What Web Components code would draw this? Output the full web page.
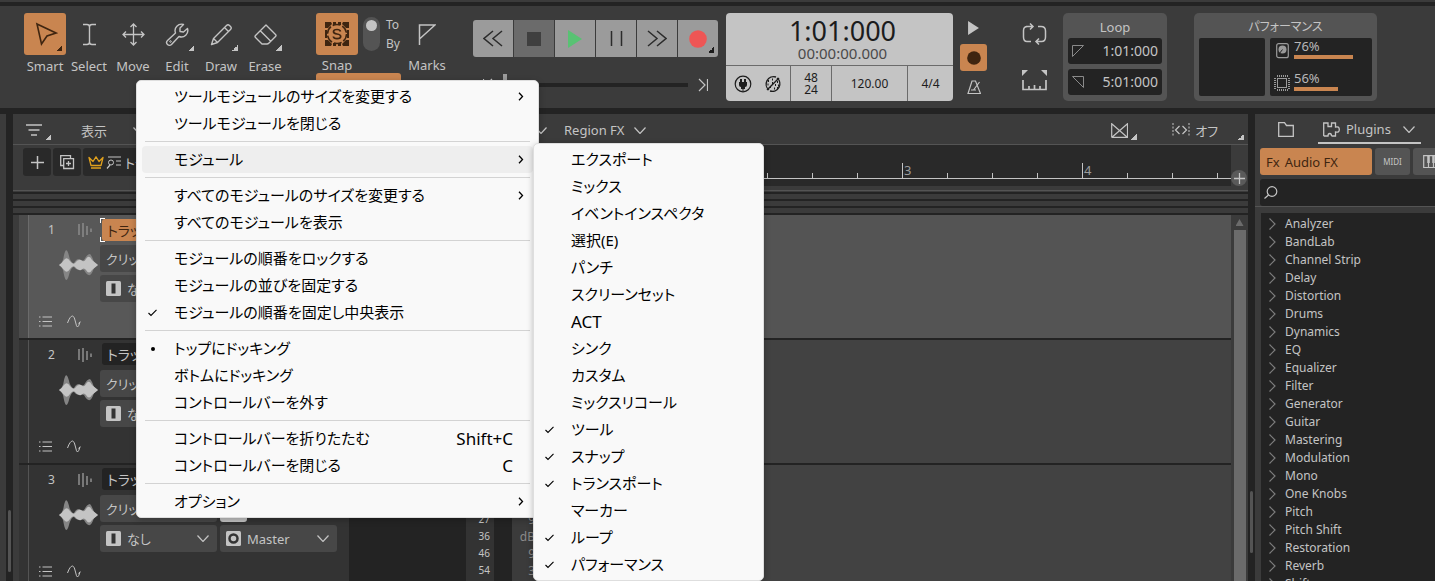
<!DOCTYPE html>
<html lang="ja">
<head>
<meta charset="utf-8">
<title>Cakewalk</title>
<style>
    html, body {
        margin: 0;
        height: 100%;
        overflow: hidden;
        background: #232323;
    }
    body {
        font-family: "Noto Sans", "Noto Sans CJK JP", sans-serif;
        font-size: 13px;
        color: #c4c4c4;
        --panel: #3b3b3b;
        --dark: #232323;
        --accent: #c98550;
        --accent-ink: #3f2510;
        --line: #545454;
        --ink: #c4c4c4;
    }
</style>
</head>
<body>
<daw-app>
    <control-bar slot="bar"></control-bar>
    <track-view slot="tracks"></track-view>
    <browser-panel slot="browser"></browser-panel>
</daw-app>
<context-menu id="main-menu"></context-menu>
<context-menu id="module-menu"></context-menu>

<script>
const BASE = `
    * { box-sizing: border-box; }
    svg { display: block; flex: none; fill: none; stroke: currentColor; }
    button, input, select {
        margin: 0; padding: 0; border: 0; background: none;
        font: inherit; color: inherit; outline: 0; border-radius: 0;
    }
    .tri {
        position: absolute; right: 0; bottom: 0;
        width: 6px; height: 6px;
        background: linear-gradient(135deg, transparent 50%, currentColor 50%);
    }
`;

const ICONS = {
    cursor: '<path d="M4 2 L23 11 L14 14 L8.500 22 Z" stroke-width="1.600"/>',
    ibeam: '<path d="M6 2.500 H10 Q12.500 2.500 12.500 5 V20 Q12.500 22.500 10 22.500 H6 M19 2.500 H15 Q12.500 2.500 12.500 5 M19 22.500 H15 Q12.500 22.500 12.500 20" stroke-width="1.400"/>',
    move: '<path d="M12.500 2 V23 M2 12.500 H23 M9.500 5 L12.500 2 L15.500 5 M9.500 20 L12.500 23 L15.500 20 M5 9.500 L2 12.500 L5 15.500 M20 9.500 L23 12.500 L20 15.500" stroke-width="1.300"/>',
    wrench: '<path d="M18.500 2.500 A6.500 6.500 0 0 0 10.500 11 L2.500 18.500 A2.700 2.700 0 0 0 6.500 22.500 L14 14.500 A6.500 6.500 0 0 0 22.500 6.500 L18.500 10 L15 9.500 L15 6 Z" stroke-width="1.400" stroke-linejoin="round"/><circle cx="5.500" cy="19.500" r=".8"/>',
    pencil: '<path d="M2.500 22.500 L4.500 16.500 L17.500 3.500 Q19 2 20.500 3.500 L21.500 4.500 Q23 6 21.500 7.500 L8.500 20.500 Z M15.500 5.500 L19.500 9.500 M4.500 16.500 L8.500 20.500" stroke-width="1.400" stroke-linejoin="round"/>',
    eraser: '<path d="M13 3 L22.500 12.500 Q23.500 13.500 22.500 14.500 L16 21 Q15 22 14 22 H9 L2.500 15.500 Q1.500 14.500 2.500 13.500 Z M7 8.500 L18 19.500" stroke-width="1.400" stroke-linejoin="round"/>',
    snap: '<g fill="currentColor" stroke="none"><path d="M0 0 H6 L7 2 L3 6 H0 Z M0 24 H6 L7 22 L3 18 H0 Z M24 0 H18 L17 2 L21 6 H24 Z M24 24 H18 L17 22 L21 18 H24 Z"/><path d="M8 0 H11 V3 H8 Z M13 0 H16 V3 H13 Z M8 21 H11 V24 H8 Z M13 21 H16 V24 H13 Z M0 8 H2 V16 H0 Z M22 8 H24 V16 H22 Z"/></g><circle cx="12" cy="12" r="9.500" stroke-width="1.500" stroke-dasharray="8 2"/><path d="M15.500 9.500 Q15 7.500 12 7.500 Q8.500 7.500 8.500 9.800 Q8.500 11.600 12 12 Q15.700 12.500 15.700 14.500 Q15.700 16.700 12 16.700 Q8.600 16.700 8.300 14.500" stroke-width="1.700"/>',
    marks: '<path d="M1.500 21 V1 H17 L1.500 15" stroke-width="1.500"/>',
    rewind: '<path d="M10 1 L1 8.500 L10 16 M19 1 L10 8.500 L19 16" stroke-width="1.500"/>',
    stop: '<path d="M0 0 H14 V14 H0 Z" fill="currentColor" stroke="none"/>',
    play: '<path d="M0 0 L14 9 L0 18 Z" fill="currentColor" stroke="none"/>',
    pause: '<path d="M1.500 0 V15 M11.500 0 V15" stroke-width="1.500"/>',
    forward: '<path d="M1 1 L10 8.500 L1 16 M10 1 L19 8.500 L10 16" stroke-width="1.500"/>',
    record: '<circle cx="9" cy="9" r="8.800" fill="currentColor" stroke="none"/>',
    toEnd: '<path d="M1 1 L7 7 L1 13 M9.500 1 V13" stroke-width="1.200"/>',
    toStart: '<path d="M9 1 L3 7 L9 13 M.5 1 V13" stroke-width="1.200"/>',
    plug: '<circle cx="9" cy="9" r="7.800" stroke-width="1.200"/><path d="M5 7 H13 V10 Q13 12 11 12 V14 H7 V12 Q5 12 5 10 Z M6 4 H8 V7 H6 Z M10 4 H12 V7 H10 Z" fill="currentColor" stroke="none"/><path d="M9 13 V16"/>',
    link: '<path d="M5 15 A7.500 7.500 0 0 1 12 2 M13 3 A7.500 7.500 0 0 1 6 16 M3 15 L15 3" stroke-width="1.400"/><path d="M4 6 h1 M3.500 9.500 h1 M6 12 h1 M8 4.500 h1 M8 8 h1 M11 10 h1 M13 7 h1 M14 10.500 h1 M10 13.500 h1 M13 13 h1" stroke-width="1.800"/>',
    metronome: '<path d="M5 1 H8.500 L13.500 13.500 H1 Z M4 10 H9 M6.500 10 L12.500 2" stroke-width="1.200"/>',
    loop: '<path d="M7 3.500 H5.500 Q1.500 3.500 1.500 7.500 V14 Q1.500 18.500 5 18.500 M4 3.500 H10 M8 .500 L11 3.500 L8 6.500 M16 3.500 H19 Q23.500 3.500 23.500 8 V14 Q23.500 18.500 19.500 18.500 H14 M17 15.500 L14 18.500 L17 21.500 M5 18.500 H9" stroke-width="1.500"/>',
    loopRuler: '<path d="M0 0 H6 L0 6 Z M25 0 H19 L25 6 Z" fill="currentColor" stroke="none"/><path d="M1 10 V19.500 H24 V10 M7 16 V19 M12.500 15 V19 M18 16 V19" stroke-width="1.700"/>',
    flagIn: '<path d="M.5 11.500 V.5 H11.500 Z"/>',
    flagOut: '<path d="M11.500 11.500 V.5 H.5 Z"/>',
    disk: '<rect x=".7" y=".7" width="11.600" height="14" rx="2" stroke-width="1.200"/><circle cx="6.500" cy="6.500" r="4" fill="currentColor" stroke="none"/><path d="M6.500 6.500 L3 11" stroke="#232323"/>',
    cpu: '<rect x="3.500" y="3.500" width="9" height="9"/><path d="M3 1 H14 M3 15 H14 M1 3 V14 M15 3 V14" stroke-width="2" stroke-dasharray="1 1"/>',
    filter: '<path d="M0 1 H16 M2.500 6 H13.500 M5 11 H11" stroke-width="1.500"/>',
    plus: '<path d="M6.500 0 V13 M0 6.500 H13" stroke-width="1.500"/>',
    dup: '<path d="M3.500 10.500 H.7 V.7 H10.500 V3.500 M3.700 3.700 H13.500 V13.500 H3.700 Z M8.500 6 V11 M6 8.500 H11" stroke-width="1.300"/>',
    crown: '<path d="M1 1.500 L3 9.500 H13 L15 1.500 L11 5.500 L8 .8 L5 5.500 Z M3 12 H13" stroke-width="1.300" stroke-linejoin="round"/>',
    quick: '<path d="M2 1 H15 M10 5 H15 M10 9 H15 M1 12.500 L4 9" stroke-width="1.200"/><circle cx="5" cy="6.500" r="2.500"/>',
    bars: '<path d="M1 1 V12 M5 0 V14 M9 3 V12 M13 5.500 V9" stroke-width="1.700"/>',
    wave: '<path d="M0 16 Q4 14 5 6 Q7.500 -5 10.500 9 Q13 15 15 14 Q17 10 20 10 Q23 12 25 11 Q28 5 31 5 Q33 7 35 13 L39 16 L35 19 Q33 25 31 26 Q28 27 25 21 Q23 20 20 21 Q17 21 15 18 Q13 17 10.500 24 Q7.500 37 5 26 Q4 18 0 16 Z" fill="#858585" stroke="none"/><path d="M0 16 Q3 14 5 11 Q8 7 11 12 Q14 16 16 14 Q19 10 22 11 Q25 14 27 10 Q30 5 33 11 L39 16 L33 21 Q30 26 27 21 Q25 18 22 21 Q19 22 16 18 Q14 16 11 20 Q8 25 5 21 Q3 18 0 16 Z" fill="#c4c4c4" stroke="none"/>',
    list: '<path d="M0 1 H1.500 M3.500 1 H13 M0 5.500 H1.500 M3.500 5.500 H13 M0 10 H1.500 M3.500 10 H13" stroke-width="1.200"/>',
    automation: '<path d="M.5 8 Q3 1 5.500 1 Q7.500 1 8.500 7 Q9.500 12 10.500 12 Q12 11 13 7 M11.500 8.500 L13.300 6.500"/>',
    inBox: '<rect width="15" height="15" rx="1.500" fill="#c4c4c4" stroke="none"/><rect x="5.500" y="2.500" width="4" height="10" fill="#333" stroke="none"/>',
    outBox: '<rect width="15" height="15" rx="1.500" fill="#c4c4c4" stroke="none"/><circle cx="7.500" cy="7.500" r="4" stroke="#333" stroke-width="2.500"/>',
    chev: '<path d="M.5 .5 L6 6.500 L11.500 .5" stroke-width="1.200"/>',
    chevR: '<path d="M.5 .5 L6 6 L.5 11.500" stroke-width="1.200"/>',
    xfade: '<path d="M.7 14.500 V.7 L16.500 14.500 V.7 L.7 14.500 M.7 14.300 H16.500" stroke-width="1.200"/>',
    gridSnap: '<path d="M1 0 V14 M17 0 V14" stroke-dasharray="2 1.500"/><path d="M7.500 3 L3.500 7 L7.500 11 M10.500 3 L14.500 7 L10.500 11" stroke-width="1.200"/>',
    folder: '<path d="M.7 14.300 V.7 H6.500 L8.500 3.500 H15.300 V14.300 Z" stroke-width="1.300"/>',
    puzzle: '<path d="M.7 14 V1 H5 V4.500 H8.500 V1 H12.500 V5 Q16.300 4 16.300 7.500 Q16.300 11 12.500 10 V14 H8.500 M.7 14 H5 Q5 11.500 6.800 11.500 Q8.500 11.500 8.500 14" stroke-width="1.300"/>',
    keys: '<path d="M.7 .7 H16 V12.500 H.7 Z M5.500 0 V12 M10.500 0 V12" stroke-width="1.200"/><path d="M5.500 1 V8 M10.500 1 V8" stroke-width="2.500"/>',
    search: '<circle cx="8" cy="5.500" r="4.800" stroke-width="1.200"/><path d="M4.500 9 L.5 12.500" stroke-width="1.200"/>',
    check: '<path d="M.5 4 L3 6.500 L8.500 .8" stroke-width="1.100"/>',
    arrow: '<path d="M1 .8 L4.500 4.500 L1 8.200" stroke-width="1.300"/>'
};

function icon(name, w, h) {
    return `<svg width="${w}" height="${h}" viewBox="0 0 ${w} ${h}" aria-hidden="true">${ICONS[name]}</svg>`;
}

class DawApp extends HTMLElement {
    constructor() {
        super();
        this.attachShadow({ mode: 'open' });
        this.shadowRoot.innerHTML = `
            <style>
                ${BASE}
                :host {
                    display: grid;
                    grid-template-rows: 2px auto minmax(0, 1fr);
                    height: 100vh;
                    background: var(--dark);
                }
                .edge { background: var(--panel); }
                .main {
                    display: grid;
                    grid-template-columns: 6px 7px minmax(0, 1fr) 7px 180px;
                    grid-template-rows: minmax(0, 1fr);
                    min-height: 0;
                }
                .grip { display: flex; flex-direction: column; justify-content: flex-end; align-items: center; }
                .grip i { width: 3px; height: 62px; border-radius: 2px; background: #545454; }
                .grip.l { padding-bottom: 9px; }
                .grip.r { padding-bottom: 28px; }
                ::slotted(*) { min-width: 0; min-height: 0; }
            </style>
            <div class="edge"></div>
            <slot name="bar"></slot>
            <div class="main">
                <div class="edge"></div>
                <div class="grip l"><i></i></div>
                <slot name="tracks"></slot>
                <div class="grip r"><i></i></div>
                <slot name="browser"></slot>
            </div>
        `;
    }
}

class ToolButton extends HTMLElement {
    constructor() {
        super();
        this.attachShadow({ mode: 'open' });
    }
    connectedCallback() {
        const w = Number(this.getAttribute('w') || 25);
        const h = Number(this.getAttribute('h') || 25);
        this.shadowRoot.innerHTML = `
            <style>
                ${BASE}
                :host { display: block; width: 44px; }
                button { display: flex; flex-direction: column; align-items: center; width: 100%; }
                .box {
                    position: relative;
                    display: grid; place-items: center;
                    width: 42px; height: 42px; border-radius: 3px;
                }
                :host([active]) .box { background: var(--accent); color: var(--accent-ink); }
                .tri { right: 4px; bottom: 4px; }
                .label { line-height: var(--label-line, 20px); }
            </style>
            <button type="button">
                <span class="box">${icon(this.getAttribute('icon'), w, h)}${this.hasAttribute('more') ? '<i class="tri"></i>' : ''}</span>
                <span class="label"><slot></slot></span>
            </button>
        `;
    }
}

class TransportBar extends HTMLElement {
    constructor() {
        super();
        this.attachShadow({ mode: 'open' });
        this.shadowRoot.innerHTML = `
            <style>
                ${BASE}
                :host { display: block; width: 245px; padding-top: 7px; }
                .keys { display: grid; grid-template-columns: repeat(6, 1fr); gap: 1px; border-radius: 3px; overflow: hidden; }
                .keys button { position: relative; display: grid; place-items: center; height: 37px; background: #9b9b9b; color: #2b2b2b; }
                .keys .stop { background: #6b6b6b; color: #3f3f3f; }
                .keys .play { color: #58c273; }
                .keys .rec { color: #ee5655; }
                .tri { right: 4px; bottom: 4px; color: #1c1c1c; }
                .seek { display: flex; align-items: center; gap: 10px; padding: 0 10px; margin-top: 17px; height: 22px; }
                input { appearance: none; flex: 1; min-width: 0; height: 22px; }
                input::-webkit-slider-runnable-track { height: 4px; background: var(--dark); }
                input::-webkit-slider-thumb { appearance: none; width: 4px; height: 22px; margin-top: -9px; background: #9b9b9b; }
            </style>
            <div class="keys">
                <button type="button" aria-label="Rewind">${icon('rewind', 20, 17)}</button>
                <button type="button" class="stop" aria-label="Stop">${icon('stop', 14, 14)}</button>
                <button type="button" class="play" aria-label="Play">${icon('play', 14, 18)}</button>
                <button type="button" aria-label="Pause">${icon('pause', 13, 15)}</button>
                <button type="button" aria-label="Forward">${icon('forward', 20, 17)}</button>
                <button type="button" class="rec" aria-label="Record">${icon('record', 18, 18)}<i class="tri"></i></button>
            </div>
            <div class="seek">
                ${icon('toStart', 10, 14)}
                <input type="range" min="0" max="100" value="0" aria-label="Position">
                ${icon('toEnd', 10, 14)}
            </div>
        `;
    }
}

class TimeDisplay extends HTMLElement {
    constructor() {
        super();
        this.attachShadow({ mode: 'open' });
        this.shadowRoot.innerHTML = `
            <style>
                ${BASE}
                :host {
                    display: grid; grid-template-rows: 52px 1fr;
                    width: 227px; border-radius: 4px;
                    background: #c4c4c4; color: #1c1c1c;
                    text-align: center;
                }
                .now { padding: 2px 0 0 6px; }
                .big { font-size: 27px; line-height: 31px; }
                .small { font-size: 15px; line-height: 15px; color: #4a4a4a; }
                .cells { display: grid; grid-template-columns: 64px 41px 76px 1fr; border-top: 1px solid #6b6b6b; font-size: 12px; line-height: 12px; }
                .cells > * { display: grid; place-content: center; }
                .cells > * + * { border-left: 1px solid #6b6b6b; }
                .cells .icons { display: flex; justify-content: center; align-items: center; gap: 12px; }
            </style>
            <div class="now">
                <div class="big">1:01:000</div>
                <div class="small">00:00:00.000</div>
            </div>
            <div class="cells">
                <div class="icons">${icon('plug', 18, 18)}${icon('link', 18, 18)}</div>
                <div><span>48</span><span>24</span></div>
                <div>120.00</div>
                <div>4/4</div>
            </div>
        `;
    }
}

class LoopPanel extends HTMLElement {
    constructor() {
        super();
        this.attachShadow({ mode: 'open' });
        this.shadowRoot.innerHTML = `
            <style>
                ${BASE}
                :host { display: grid; grid-template-rows: 20px 26px 26px; row-gap: 5px; width: 104px; padding: 0 5px; border-radius: 5px; background: #545454; }
                .title { text-align: center; line-height: 28px; }
                label { display: flex; align-items: center; gap: 8px; padding: 0 4px; border-radius: 3px; background: var(--dark); color: #8a8a8a; }
                input { flex: 1; width: 0; padding-bottom: 2px; text-align: right; color: var(--ink); font-size: 14px; }
            </style>
            <div class="title">Loop</div>
            <label>${icon('flagIn', 12, 12)}<input value="1:01:000" aria-label="Loop start"></label>
            <label>${icon('flagOut', 12, 12)}<input value="5:01:000" aria-label="Loop end"></label>
        `;
    }
}

class PerformancePanel extends HTMLElement {
    constructor() {
        super();
        this.attachShadow({ mode: 'open' });
        this.shadowRoot.innerHTML = `
            <style>
                ${BASE}
                :host { display: grid; grid-template-rows: 25px 58px; width: 183px; padding: 0 5px; border-radius: 5px; background: #545454; }
                .title { text-align: center; line-height: 27px; font-size: 12px; font-feature-settings: "palt"; }
                .boxes { display: grid; grid-template-columns: 66px 1fr; gap: 5px; }
                .boxes > div { border-radius: 2px; background: var(--dark); }
                .stats { display: grid; grid-template-rows: 21px 21px; row-gap: 11px; padding-left: 4px; }
                .stat { display: grid; grid-template-columns: 16px 1fr; column-gap: 4px; align-items: end; justify-items: center; color: #9b9b9b; }
                .v { justify-self: stretch; color: #b8b8b8; line-height: 17px; }
                .bar { height: 4px; background: var(--accent); }
            </style>
            <div class="title">パフォーマンス</div>
            <div class="boxes">
                <div></div>
                <div class="stats">
                    <div class="stat">${icon('disk', 13, 16)}<div class="v">76%<div class="bar" style="width: 76%"></div></div></div>
                    <div class="stat">${icon('cpu', 16, 16)}<div class="v">56%<div class="bar" style="width: 56%"></div></div></div>
                </div>
            </div>
        `;
    }
}

class ControlBar extends HTMLElement {
    constructor() {
        super();
        this.attachShadow({ mode: 'open' });
        this.shadowRoot.innerHTML = `
            <style>
                ${BASE}
                :host { display: block; padding: 4px 0 6px; background: var(--dark); }
                .bar { display: flex; height: 102px; padding: 7px 23px; overflow: hidden; background: var(--panel); }
                .bar > * { flex: none; }
                .tools { display: flex; margin-right: 28px; --label-line: 22px; }
                .snap { display: grid; grid-template-columns: 44px 18px auto; grid-template-rows: 60px 28px; column-gap: 4px; width: 86px; margin-right: 4px; }
                .snap button.value { grid-column: 1 / 4; margin-left: 1px; border-radius: 3px; background: var(--accent); color: var(--accent-ink); }
                .switch { appearance: none; width: 17px; height: 34px; margin-top: 4px; border-radius: 9px; background: #545454; }
                .switch::before { content: ""; display: block; width: 11px; height: 11px; margin: 3px; border-radius: 50%; background: var(--ink); }
                .toby { font-size: 12px; line-height: 19px; padding: 2px 0 0 1px; }
                .marks { margin-right: 24px; }
                transport-bar { margin-right: 8px; }
                time-display { margin-right: 7px; }
                .mini { display: flex; flex-direction: column; align-items: center; justify-content: space-between; width: 27px; padding: 8px 0 7px; margin-right: 35px; }
                .mini .on { display: grid; place-items: center; width: 27px; height: 27px; border-radius: 3px; background: var(--accent); color: var(--accent-ink); }
                .loops { display: flex; flex-direction: column; justify-content: space-between; padding: 10px 0 10px; margin-right: 16px; }
                loop-panel { margin-right: 27px; }
            </style>
            <div class="bar">
                <div class="tools">
                    <tool-button icon="cursor" active more>Smart</tool-button>
                    <tool-button icon="ibeam">Select</tool-button>
                    <tool-button icon="move">Move</tool-button>
                    <tool-button icon="wrench" more>Edit</tool-button>
                    <tool-button icon="pencil" more>Draw</tool-button>
                    <tool-button icon="eraser" more>Erase</tool-button>
                </div>
                <div class="snap">
                    <tool-button icon="snap" w="24" h="24" active>Snap</tool-button>
                    <input class="switch" type="checkbox" aria-label="Snap To / By">
                    <div class="toby"><div>To</div><div>By</div></div>
                    <button type="button" class="value" aria-label="Snap value"></button>
                </div>
                <tool-button class="marks" icon="marks" w="18" h="21">Marks</tool-button>
                <transport-bar></transport-bar>
                <time-display></time-display>
                <div class="mini">
                    <button type="button" aria-label="Audition">${icon('play', 11, 14).replace('0 0 11 14', '0 0 14 18')}</button>
                    <button type="button" class="on" aria-label="Record mode">${icon('record', 14, 14).replace('0 0 14 14', '0 0 18 18')}</button>
                    <button type="button" aria-label="Metronome">${icon('metronome', 14, 14)}</button>
                </div>
                <div class="loops">
                    <button type="button" aria-label="Loop on/off">${icon('loop', 25, 22)}</button>
                    <button type="button" aria-label="Set loop to selection">${icon('loopRuler', 25, 21)}</button>
                </div>
                <loop-panel></loop-panel>
                <performance-panel></performance-panel>
            </div>
        `;
    }
}

class TrackStrip extends HTMLElement {
    constructor() {
        super();
        this.attachShadow({ mode: 'open' });
    }
    connectedCallback() {
        this.shadowRoot.innerHTML = `
            <style>
                ${BASE}
                :host { display: grid; grid-template-columns: 10px 71px 1fr; height: 125px; border-bottom: 2px solid var(--dark); background: #333; }
                :host([active]) { background: #585858; }
                .handle { border-right: 1px solid #545454; }
                :host([active]) .handle { background: #4b4b4b; border-color: #6b6b6b; }
                .side { display: flex; flex-direction: column; padding-top: 5px; }
                .top { display: flex; justify-content: space-between; align-items: center; padding: 0 7px 0 19px; line-height: 19px; height: 19px; font-size: 12px; }
                .top svg { color: #858585; }
                .side > svg { align-self: flex-end; margin: 10px 2px 0 0; }
                .foot { display: flex; align-items: center; gap: 15px; margin-top: 34px; padding-left: 10px; }
                .ctl { display: grid; grid-template-columns: 117px 117px; grid-template-rows: 24px 27px 27px; gap: 3px; padding-top: 3px; align-content: start; }
                .name { grid-column: 1 / 3; display: flex; padding: 0 10px 2px 2px; }
                .name input { flex: 1; padding: 0 5px; border-radius: 3px; background: var(--dark); font-feature-settings: "palt"; font-size: 14px; }
                :host([active]) .name input { background: var(--accent); color: var(--accent-ink); }
                :host([active]) .name {
                    background:
                        linear-gradient(#fff, #fff) 0 0 / 5px 1px, linear-gradient(#fff, #fff) 0 0 / 1px 5px,
                        linear-gradient(#fff, #fff) 0 100% / 5px 1px, linear-gradient(#fff, #fff) 0 100% / 1px 5px;
                    background-repeat: no-repeat;
                    padding: 1px 10px 1px 2px;
                }
                .drop { display: flex; align-items: center; gap: 6px; padding: 0 8px 0 6px; border-radius: 3px; background: #474747; }
                select { appearance: none; flex: 1; width: 0; font-feature-settings: "palt"; }
                .solo { width: 27px; border-radius: 3px; background: #c4c4c4; }
            </style>
            <div class="handle"></div>
            <div class="side">
                <div class="top"><span>${this.getAttribute('number')}</span>${icon('bars', 15, 14)}</div>
                ${icon('wave', 39, 32)}
                <div class="foot">${icon('list', 13, 11)}${icon('automation', 14, 13)}</div>
            </div>
            <div class="ctl">
                <div class="name"><input value="トラック ${this.getAttribute('number')}" aria-label="Track name"></div>
                <label class="drop"><select aria-label="Clips"><option>クリップ</option></select>${icon('chev', 12, 7)}</label>
                <button type="button" class="solo" aria-label="Read"></button>
                <label class="drop">${icon('inBox', 15, 15)}<select aria-label="Input"><option>なし</option></select>${icon('chev', 12, 7)}</label>
                <label class="drop">${icon('outBox', 15, 15)}<select aria-label="Output"><option>Master</option></select>${icon('chev', 12, 7)}</label>
            </div>
        `;
    }
}

class TimeRuler extends HTMLElement {
    constructor() {
        super();
        this.attachShadow({ mode: 'open' });
        this.shadowRoot.innerHTML = `
            <style>
                ${BASE}
                :host { display: flex; overflow: hidden; background: #292929; padding: 18px 0 7px; }
                .line { display: flex; flex: 1; overflow: hidden; border-bottom: 1px solid #c4c4c4; }
                .bar {
                    flex: none; width: 180px; padding-left: 1px;
                    border-left: 1px solid #c4c4c4;
                    line-height: 14px; color: #9b9b9b;
                    background: repeating-linear-gradient(90deg, transparent 0 44px, #c4c4c4 44px 45px) 0 100% / 136px 5px no-repeat;
                }
            </style>
            <div class="line">${[1, 2, 3, 4].map(n => `<div class="bar">${n}</div>`).join('')}</div>
        `;
    }
}

class TrackView extends HTMLElement {
    constructor() {
        super();
        this.attachShadow({ mode: 'open' });
        this.shadowRoot.innerHTML = `
            <style>
                ${BASE}
                :host { display: grid; grid-template-rows: 31px 46px 24px minmax(0, 1fr); background: var(--panel); overflow: hidden; }
                .head { display: flex; align-items: center; border-bottom: 1px solid #545454; padding: 2px 0 0 13px; }
                .more { position: relative; padding-right: 9px; height: 19px; display: flex; align-items: center; }
                .view { display: flex; align-items: center; gap: 26px; width: 454px; margin-left: 30px; }
                .region { display: flex; align-items: center; gap: 10px; }
                .region span { padding: 0 0 0 7px; }
                .xf { margin-left: auto; margin-right: 35px; }
                .off { gap: 5px; padding-right: 26px; margin-right: 4px; font-feature-settings: "palt"; }
                .row { display: grid; grid-template-columns: 529px 1fr 17px; border-bottom: 1px solid #545454; }
                .btns { display: flex; gap: 2px; padding: 3px 0 0 10px; }
                .btns button { display: flex; align-items: center; justify-content: center; width: 28px; height: 28px; border-radius: 3px; background: #292929; }
                .btns .fx { width: 120px; justify-content: flex-start; gap: 2px; padding-left: 5px; font-feature-settings: "palt"; }
                .btns .fx svg:first-child { color: #e0a01d; }
                time-ruler { margin-bottom: 4px; }
                .zoom { display: flex; flex-direction: column; justify-content: flex-end; padding-bottom: 4px; }
                .zoom button { display: grid; place-items: center; width: 16px; height: 16px; border-radius: 50%; background: #5a5a5a; }
                .buses { background: repeating-linear-gradient(var(--panel) 0 1px, var(--dark) 1px 3px, var(--panel) 3px 7px); }
                .body { display: grid; grid-template-columns: 6px 330px 117px 28px 18px 28px 2px minmax(0, 1fr) 17px; grid-template-rows: minmax(0, 1fr); min-height: 0; overflow: hidden; }
                .gap { background: var(--dark); }
                .scale, .db { display: flex; flex-direction: column; justify-content: flex-end; text-align: right; line-height: 17px; font-size: 10px; padding: 0 4px 2px; }
                .scale { background: #333; }
                .db { color: #8a8a8a; font-size: 12px; padding-right: 5px; }
                .lanes i { display: block; height: 125px; border-bottom: 2px solid var(--dark); background: #424242; }
                .lanes i:first-child { background: #545454; }
                .scroll { display: flex; flex-direction: column; align-items: center; }
                .up { width: 8px; height: 7px; margin: 4px 0; background: #6b6b6b; clip-path: polygon(50% 0, 100% 100%, 0 100%); }
                .thumb { flex: 1; width: 12px; background: #6b6b6b; }
            </style>
            <div class="head">
                <button type="button" class="more" aria-label="Track manager">${icon('filter', 16, 12)}<i class="tri"></i></button>
                <button type="button" class="view">表示 ${icon('chev', 12, 7)}</button>
                <button type="button" class="region">${icon('chev', 12, 7)}<span>Region FX</span>${icon('chev', 12, 7)}</button>
                <button type="button" class="more xf" aria-label="Auto crossfade">${icon('xfade', 17, 15)}<i class="tri"></i></button>
                <button type="button" class="more off">${icon('gridSnap', 18, 14)}オフ<i class="tri"></i></button>
            </div>
            <div class="row">
                <div class="btns">
                    <button type="button" aria-label="Add track">${icon('plus', 13, 13)}</button>
                    <button type="button" aria-label="Duplicate track">${icon('dup', 15, 15)}</button>
                    <button type="button" class="fx">${icon('crown', 16, 13)}${icon('quick', 17, 13)}トラック</button>
                </div>
                <time-ruler></time-ruler>
                <div class="zoom"><button type="button" aria-label="Add marker">${icon('plus', 11, 11).replace('0 0 11 11', '0 0 13 13')}</button></div>
            </div>
            <div class="buses"></div>
            <div class="body">
                <div></div>
                <div class="strips">
                    <track-strip number="1" active></track-strip>
                    <track-strip number="2"></track-strip>
                    <track-strip number="3"></track-strip>
                </div>
                <div class="gap"></div>
                <div class="scale"><span>27</span><span>36</span><span>46</span><span>54</span></div>
                <div class="gap"></div>
                <div class="db"><span>9</span><span>dB</span><span>9</span><span>3</span></div>
                <div class="gap"></div>
                <div class="lanes"><i></i><i></i><i></i></div>
                <div class="scroll"><i class="up"></i><i class="thumb"></i></div>
            </div>
        `;
    }
}

class BrowserPanel extends HTMLElement {
    constructor() {
        super();
        const names = ['Analyzer', 'BandLab', 'Channel Strip', 'Delay', 'Distortion', 'Drums', 'Dynamics', 'EQ', 'Equalizer', 'Filter', 'Generator', 'Guitar', 'Mastering', 'Modulation', 'Mono', 'One Knobs', 'Pitch', 'Pitch Shift', 'Restoration', 'Reverb', 'Shift'];
        this.attachShadow({ mode: 'open' });
        this.shadowRoot.innerHTML = `
            <style>
                ${BASE}
                :host { display: grid; grid-template-rows: 30px 31px 31px minmax(0, 1fr); background: var(--panel); overflow: hidden; }
                .tabs { display: flex; align-items: center; padding-left: 23px; gap: 24px; }
                .tabs .on { display: flex; align-items: center; gap: 6px; height: 30px; padding: 2px 6px 0 5px; border-bottom: 2px solid #c4c4c4; }
                .tabs .on svg:last-child { margin-left: 6px; }
                .kinds { display: flex; gap: 3px; padding: 4px 0 0 5px; overflow: hidden; }
                .kinds button { flex: none; display: flex; align-items: center; justify-content: center; width: 35px; height: 27px; border-radius: 3px; background: #545454; font-size: 8px; }
                .kinds .on { width: 112px; justify-content: flex-start; gap: 5px; padding-left: 6px; background: var(--accent); color: var(--accent-ink); font-size: 13px; }
                .kinds .inst { width: 80px; justify-content: flex-start; padding-left: 10px; }
                .find { display: flex; align-items: center; padding-left: 4px; margin: 4px 0 0 5px; border-radius: 3px 0 0 3px; background: var(--dark); }
                .find input { flex: 1; width: 0; padding-left: 6px; }
                ul { margin: 0 0 0 6px; padding: 2px 0 0; list-style: none; background: var(--dark); overflow: hidden; font-size: 12px; }
                .rule { border-top: 1px solid #545454; padding-top: 6px; min-height: 0; display: grid; grid-template-rows: minmax(0, 1fr); }
                li { display: flex; align-items: center; gap: 9px; height: 18px; padding-left: 8px; line-height: 18px; }
                li svg { color: #7d7d7d; }
            </style>
            <div class="tabs">
                <button type="button" aria-label="Media">${icon('folder', 16, 15)}</button>
                <button type="button" class="on">${icon('puzzle', 17, 15)}Plugins ${icon('chev', 12, 7)}</button>
            </div>
            <div class="kinds">
                <button type="button" class="on"><span>Fx</span><span>Audio FX</span></button>
                <button type="button">MIDI</button>
                <button type="button" class="inst" aria-label="Instruments">${icon('keys', 17, 13)}</button>
            </div>
            <label class="find">${icon('search', 14, 13)}<input type="search" aria-label="Search plugins"></label>
            <div class="rule"><ul>${names.map(n => `<li>${icon('chevR', 7, 12)}${n}</li>`).join('')}</ul></div>
        `;
    }
}

class ContextMenu extends HTMLElement {
    constructor() {
        super();
        this.attachShadow({ mode: 'open' });
    }
    // a null entry is a separator
    set items(items) {
        this.shadowRoot.innerHTML = `
            <style>
                ${BASE}
                :host {
                    position: absolute;
                    display: block;
                    box-sizing: border-box;
                    border: 1px solid #dedede;
                    border-radius: 5px;
                    padding: 2px 5px;
                    background: #f9f9f9;
                    color: #000;
                    box-shadow: 0 2px 6px rgba(0, 0, 0, .25);
                    font-size: 15px;
                    font-feature-settings: "palt";
                }
                :host(#main-menu) { left: 136px; top: 80px; width: 403px; }
                :host(#module-menu) { left: 533px; top: 143px; width: 231px; }
                button {
                    display: grid; grid-template-columns: 32px 1fr auto 20px;
                    align-items: center; width: 100%; height: 27px;
                    border-radius: 4px; text-align: left; line-height: 27px;
                }
                button.open { background: #eee; }
                .mark { padding-left: 6px; }
                .dot { display: block; width: 4px; height: 4px; margin-left: 3px; border-radius: 50%; background: #000; }
                .key, .latin { font-size: 17px; }
                .sub { padding-left: 5px; }
                hr { height: 1px; margin: 4px 3px; border: 0; background: #d3d3d3; }
            </style>
            ${items.map(it => it === null ? '<hr>' : `
                <button type="button" role="menuitem" class="${it.open ? 'open' : ''}">
                    <span class="mark">${it.check ? icon('check', 9, 8) : ''}${it.dot ? '<span class="dot"></span>' : ''}</span>
                    <span class="${it.latin ? 'latin' : ''}">${it.text}</span>
                    <span class="key">${it.key || ''}</span>
                    <span class="sub">${it.sub ? icon('arrow', 6, 9) : ''}</span>
                </button>`).join('')}
        `;
    }
}

customElements.define('tool-button', ToolButton);
customElements.define('transport-bar', TransportBar);
customElements.define('time-display', TimeDisplay);
customElements.define('loop-panel', LoopPanel);
customElements.define('performance-panel', PerformancePanel);
customElements.define('control-bar', ControlBar);
customElements.define('track-strip', TrackStrip);
customElements.define('time-ruler', TimeRuler);
customElements.define('track-view', TrackView);
customElements.define('browser-panel', BrowserPanel);
customElements.define('context-menu', ContextMenu);
customElements.define('daw-app', DawApp);

document.getElementById('main-menu').items = [
    { text: 'ツールモジュールのサイズを変更する', sub: true },
    { text: 'ツールモジュールを閉じる' },
    null,
    { text: 'モジュール', sub: true, open: true },
    null,
    { text: 'すべてのモジュールのサイズを変更する', sub: true },
    { text: 'すべてのモジュールを表示' },
    null,
    { text: 'モジュールの順番をロックする' },
    { text: 'モジュールの並びを固定する' },
    { text: 'モジュールの順番を固定し中央表示', check: true },
    null,
    { text: 'トップにドッキング', dot: true },
    { text: 'ボトムにドッキング' },
    { text: 'コントロールバーを外す' },
    null,
    { text: 'コントロールバーを折りたたむ', key: 'Shift+C' },
    { text: 'コントロールバーを閉じる', key: 'C' },
    null,
    { text: 'オプション', sub: true }
];
document.getElementById('module-menu').items = [
    { text: 'エクスポート' },
    { text: 'ミックス' },
    { text: 'イベントインスペクタ' },
    { text: '選択(E)' },
    { text: 'パンチ' },
    { text: 'スクリーンセット' },
    { text: 'ACT', latin: true },
    { text: 'シンク' },
    { text: 'カスタム' },
    { text: 'ミックスリコール' },
    { text: 'ツール', check: true },
    { text: 'スナップ', check: true },
    { text: 'トランスポート', check: true },
    { text: 'マーカー' },
    { text: 'ループ', check: true },
    { text: 'パフォーマンス', check: true }
];
</script>
</body>
</html>
